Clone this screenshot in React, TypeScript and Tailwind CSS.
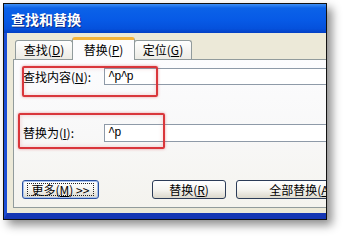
import React from "react";

const cjk = { fontFamily: '"Noto Sans CJK SC", "Liberation Sans", sans-serif' };

function U({ c }: { c: string }) {
  return <span className="underline underline-offset-[1px]">{c}</span>;
}

function Tab({ label, acc, selected, w }: { label: string; acc: string; selected?: boolean; w: string }) {
  if (selected) {
    return (
      <div
        className={`${w} h-[23px] -mb-[1px] relative z-10 flex items-center justify-center rounded-t-[3px] border-x border-[#919b9c] bg-[#fcfcfe] border-t-[3px] border-t-[#f5b53c] text-[12px] leading-none text-black -mx-[1px]`}
      >
        <span className="-mt-[1px]">
          {label}(<U c={acc} />)
        </span>
      </div>
    );
  }
  return (
    <div
      className={`${w} h-[19px] flex items-center justify-center rounded-t-[3px] border-x border-t border-[#919b9c] bg-gradient-to-b from-white to-[#ecebe5] text-[12px] leading-none text-black`}
    >
      <span>
        {label}(<U c={acc} />)
      </span>
    </div>
  );
}

function Btn({ children, w, def }: { children: React.ReactNode; w: string; def?: boolean }) {
  return (
    <div
      className={`${w} h-[19px] shrink-0 rounded-[3px] border ${def ? "border-[#2a4f9e]" : "border-[#2c3c58]"} bg-gradient-to-b from-white via-[#f6f5f1] to-[#dcd8cc] flex items-center justify-center text-[12px] leading-none text-black ${def ? "shadow-[inset_0_0_0_1px_#a9c4f0]" : ""}`}
    >
      {def ? (
        <div className="border border-dotted border-[#222] px-[4px] h-[13px] flex items-center">{children}</div>
      ) : (
        children
      )}
    </div>
  );
}

export default function App() {
  return (
    <div className="w-[348px] h-[241px] bg-white relative overflow-hidden pl-[3px] pt-[3px]" style={cjk}>
      <div className="w-[324px] h-[217px] border border-[#111] overflow-hidden shadow-[5px_5px_9px_rgba(0,0,0,0.45)] bg-[#ece9d8]">
        <div className="w-[440px] h-full flex flex-col">
          {/* title bar */}
          <div className="h-[29px] shrink-0 bg-[linear-gradient(to_bottom,#3d8ef5_0%,#0b62e8_14%,#075ae6_55%,#0551dc_85%,#0340c4_100%)] flex items-center pl-[7px]">
            <span
              className="text-white text-[14px] font-bold leading-none [text-shadow:1px_1px_0_#0b2d8a]"
            >
              查找和替换
            </span>
          </div>
          {/* body */}
          <div className="flex-1 flex flex-col border-l-[3px] border-l-[#1c4fd6] border-b-[6px] border-b-[#1537b4]">
            <div className="flex-1 flex flex-col pl-[6px] pt-[4px] pb-[5px] bg-[#ece9d8]">
              {/* tabs */}
              <div className="flex items-end pl-[2px] h-[22px]">
                <Tab label="查找" acc="D" w="w-[58px]" />
                <Tab label="替换" acc="P" w="w-[63px]" selected />
                <Tab label="定位" acc="G" w="w-[58px]" />
              </div>
              {/* panel */}
              <div className="flex-1 border border-[#919b9c] bg-gradient-to-b from-[#fcfcfe] via-[#f8f8f8] to-[#f4f3ee] flex flex-col pl-[9px] pt-[8px]">
                <div className="flex items-center h-[17px]">
                  <div className="w-[81px] text-[12px] leading-none text-black">
                    查找内容(<U c="N" />):
                  </div>
                  <div className="flex-1 h-[17px] border border-[#8e9aa8] bg-white flex items-center pl-[3px]">
                    <span className="text-[12px] leading-none tracking-[-1px] text-black" style={{ fontFamily: '"Liberation Mono", monospace' }}>
                      ^p^p
                    </span>
                  </div>
                </div>
                <div className="flex items-center h-[18px] mt-[39px]">
                  <div className="w-[81px] text-[12px] leading-none text-black">
                    替换为(<U c="I" />):
                  </div>
                  <div className="flex-1 h-[18px] border border-[#8e9aa8] bg-white flex items-center pl-[3px]">
                    <span className="text-[12px] leading-none tracking-[-1px] text-black" style={{ fontFamily: '"Liberation Mono", monospace' }}>
                      ^p
                    </span>
                  </div>
                </div>
                <div className="flex items-center mt-[38px] -ml-[1px]">
                  <Btn w="w-[77px]" def>
                    <span>
                      更多(<U c="M" />) &gt;&gt;
                    </span>
                  </Btn>
                  <div className="w-[53px] shrink-0" />
                  <Btn w="w-[74px]">
                    <span>
                      替换(<U c="R" />)
                    </span>
                  </Btn>
                  <div className="w-[10px] shrink-0" />
                  <Btn w="w-[130px]">
                    <span>
                      全部替换(<U c="A" />)
                    </span>
                  </Btn>
                </div>
              </div>
            </div>
          </div>
        </div>
      </div>
      {/* red annotation boxes */}
      <div className="absolute left-[22px] top-[66px] w-[136px] h-[31px] border-2 border-[#d9363b] rounded-[2px] shadow-[0_0_3px_rgba(217,54,59,0.5),inset_0_0_4px_rgba(217,54,59,0.25)]" />
      <div className="absolute left-[18px] top-[113px] w-[147px] h-[36px] border-2 border-[#d9363b] rounded-[2px] shadow-[0_0_3px_rgba(217,54,59,0.5),inset_0_0_4px_rgba(217,54,59,0.25)]" />
    </div>
  );
}
